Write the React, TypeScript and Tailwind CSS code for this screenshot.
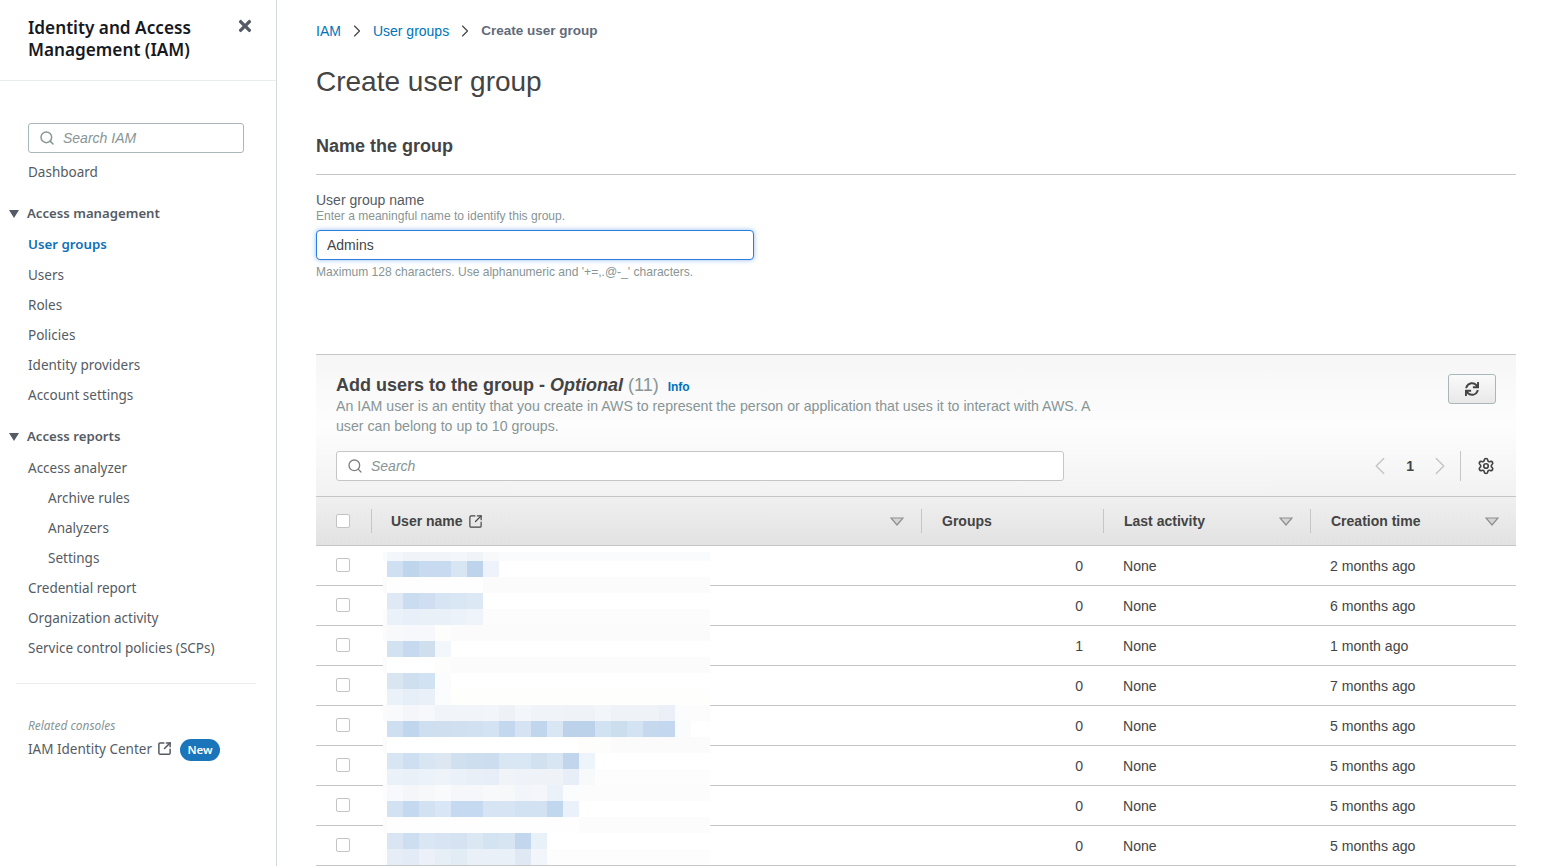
import React from "react";
import { Search, ChevronLeft, ChevronRight, Settings, SquareArrowOutUpRight } from "lucide-react";
import { FaSync, FaTimes } from "react-icons/fa";

const navFont = "font-['Noto_Sans',sans-serif]";

type NavProps = { label: string; indent?: boolean; active?: boolean };
function NavItem({ label, indent, active }: NavProps) {
  return (
    <div
      className={`h-[30px] flex items-center ${indent ? "pl-[48px]" : "pl-[28px]"} ${
        active ? "text-[13.3px] text-[#0f6fb8] font-semibold" : "text-[13.5px] text-[#545b64]"
      }`}
    >
      {label}
    </div>
  );
}

function NavSection({ label }: { label: string }) {
  return (
    <div className="h-[30px] flex items-center pl-[9px] text-[13.2px] font-semibold text-[#545b64]">
      <svg width="10" height="8" viewBox="0 0 10 8" className="mr-[8px]">
        <polygon points="0,0 10,0 5,8" fill="#545b64" />
      </svg>
      {label}
    </div>
  );
}

function Sidebar() {
  return (
    <aside className={`w-[277px] shrink-0 border-r border-[#d5dbdb] h-full bg-white ${navFont}`}>
      <div className="h-[81px] border-b border-[#eaeded] pl-[28px] pr-[22px] pt-[17px] flex items-start justify-between">
        <div className="text-[17.2px] leading-[22px] font-semibold text-[#16191f]">
          Identity and Access
          <br />
          Management (IAM)
        </div>
        <FaTimes className="text-[#545b64] text-[18px]" />
      </div>
      <div className="pt-[42px]">
        <div className="ml-[28px] mr-[32px] h-[30px] border border-[#aab7b8] rounded-[3px] flex items-center pl-[10px] font-['Liberation_Sans',sans-serif] italic text-[14px] text-[#879596]">
          <Search size={16} strokeWidth={2.2} className="mr-[8px] text-[#879596]" />
          Search IAM
        </div>
        <div className="mt-[4px]">
          <NavItem label="Dashboard" />
        </div>
        <div className="mt-[12px]">
          <NavSection label="Access management" />
          <div className="mt-[1px]">
            <NavItem label="User groups" active />
            <NavItem label="Users" />
            <NavItem label="Roles" />
            <NavItem label="Policies" />
            <NavItem label="Identity providers" />
            <NavItem label="Account settings" />
          </div>
        </div>
        <div className="mt-[12px]">
          <NavSection label="Access reports" />
          <div className="mt-[1px]">
            <NavItem label="Access analyzer" />
            <NavItem label="Archive rules" indent />
            <NavItem label="Analyzers" indent />
            <NavItem label="Settings" indent />
            <NavItem label="Credential report" />
            <NavItem label="Organization activity" />
            <NavItem label="Service control policies (SCPs)" />
          </div>
        </div>
        <div className="ml-[16px] mr-[20px] mt-[20px] border-t border-[#eaeded]" />
        <div className="pl-[28px] pt-[33px] text-[11.9px] leading-[16px] italic text-[#879596]">Related consoles</div>
        <div className="pl-[28px] mt-[4px] flex items-center h-[24px] text-[13.5px] text-[#545b64]">
          IAM Identity Center
          <SquareArrowOutUpRight size={15} strokeWidth={2.4} className="ml-[5px] -mt-[2px]" />
          <span className="ml-[8px] mt-[1px] h-[22px] w-[40px] rounded-full bg-[#1b75bb] text-white text-[11.5px] font-semibold flex items-center justify-center">
            New
          </span>
        </div>
      </div>
    </aside>
  );
}

function Caret() {
  return (
    <svg width="14" height="9" viewBox="0 0 14 9" className="shrink-0">
      <polygon points="1,1 13,1 7,8" fill="#d4d4d4" stroke="#8f8f8f" strokeWidth="1.2" />
    </svg>
  );
}

function Box() {
  return <span className="block w-[14px] h-[14px] rounded-[2px] border border-[#c4c4c4] bg-white" />;
}

const users: [string, string, string][] = [
  ["0", "None", "2 months ago"],
  ["0", "None", "6 months ago"],
  ["1", "None", "1 month ago"],
  ["0", "None", "7 months ago"],
  ["0", "None", "5 months ago"],
  ["0", "None", "5 months ago"],
  ["0", "None", "5 months ago"],
  ["0", "None", "5 months ago"],
];

const gridCols = "grid grid-cols-[55px_550px_182px_207px_206px]";

const mosaic: { h: number; bg: string; cells: string[] }[] = [
  { h: 9, bg: "#fafbfc", cells: ["#f3f6fa", "#eff4f9", "#f1f5fa", "#f1f5fa", "#f3f6fa", "#eff4f9", "#f8f9fb"] },
  { h: 16, bg: "#ffffff", cells: ["#cfe0f2", "#bfd5ec", "#c8daef", "#c8daef", "#d8e5f3", "#bed4ec", "#eef3fb"] },
  { h: 16, bg: "#fbfbfb", cells: ["#fefefe", "#fefefe", "#fefefe", "#fefefe", "#fefefe", "#fefefe"] },
  { h: 16, bg: "#ffffff", cells: ["#dee9f5", "#c9dcf0", "#cfdff1", "#d6e4f3", "#d9e6f4", "#dce8f4"] },
  { h: 16, bg: "#fcfcfc", cells: ["#eaf1f9", "#e8eff8", "#e9f0f8", "#e9f0f8", "#ecf2f9", "#eff4fa"] },
  { h: 16, bg: "#fbfbfc", cells: ["#f7f9fb", "#f6f8fb", "#f7f8fb", "#fdfdfb"] },
  { h: 16, bg: "#ffffff", cells: ["#d2e2f1", "#c6d9ee", "#cfdfee", "#f3f7fc"] },
  { h: 16, bg: "#fbfbfb", cells: ["#ffffff", "#ffffff", "#ffffff", "#fdfdfb"] },
  { h: 16, bg: "#ffffff", cells: ["#d9e5f1", "#cfdff0", "#d1e2f2", "#fafcfe"] },
  { h: 16, bg: "#fefefd", cells: ["#ebf1f9", "#e6eef7", "#e9f0f8", "#fbfcfe"] },
  {
    h: 16,
    bg: "#fbfbfc",
    cells: ["#f9fafc", "#f4f6f9", "#f7f8fb", "#f1f4f9", "#f1f4f9", "#f1f5f9", "#f2f5f9", "#eef2f7", "#f4f7fa", "#f0f3f8", "#f0f4f9", "#eff3f8", "#eff3f8", "#f3f6f9", "#eff3f8", "#eff3f8", "#eff3f8", "#ebf0f8", "#fbfcfd", "#fcfcfd"],
  },
  {
    h: 16,
    bg: "#ffffff",
    cells: ["#cddff0", "#bfd6ec", "#cddff0", "#cfdff0", "#d0e0f0", "#d1e1f1", "#d4e3f3", "#c3d7ee", "#d5e3f2", "#c0d6ec", "#d9e6f4", "#bbd2ea", "#bbd2ea", "#d1e2f3", "#cbdeee", "#d4e3f3", "#c5d8ee", "#c3d8ee", "#fafbfd"],
  },
  { h: 16, bg: "#fcfbfb", cells: ["#ffffff", "#ffffff", "#ffffff", "#ffffff", "#ffffff", "#ffffff", "#ffffff", "#ffffff", "#ffffff", "#ffffff", "#ffffff", "#ffffff", "#fefdfc", "#fdfdfc"] },
  { h: 16, bg: "#ffffff", cells: ["#d8e5f2", "#cddff0", "#d8e5f2", "#dce7f2", "#d1e0ef", "#cddeee", "#cbddee", "#d9e6f4", "#d9e6f4", "#d1e1f0", "#d8e5f3", "#c1d6ec", "#eef4fc"] },
  { h: 16, bg: "#fdfdfd", cells: ["#ebf1f9", "#eaf0f8", "#ecf2f9", "#eef3f9", "#ebf1f8", "#e9eff7", "#e7eef7", "#f0f4f9", "#eef3fa", "#eff3f8", "#eff3f8", "#e7eef7", "#f7f9fb"] },
  { h: 16, bg: "#fcfcfc", cells: ["#f8f9fc", "#f4f6fa", "#f6f8fa", "#f9fafb", "#f5f7fa", "#f5f7fa", "#f8f9fb", "#f6f8fa", "#f2f5f9", "#f4f6f9", "#ebf1f8", "#fbfcfd"] },
  { h: 16, bg: "#ffffff", cells: ["#d2e2f2", "#c4d9ef", "#d2e2f2", "#d8e6f5", "#c5daf1", "#c5daf1", "#d6e4f3", "#d6e4f3", "#d2e2f2", "#d2e2f2", "#c1d7ed", "#ebf1fa"] },
  { h: 16, bg: "#fcfcfc", cells: ["#fefefe", "#fefefe", "#fefefe", "#fefefe", "#fefefe", "#fefefe", "#fefefe", "#fefefe", "#fefefe", "#fefefe", "#fefefe", "#fefefe"] },
  { h: 16, bg: "#ffffff", cells: ["#d9e5f3", "#cddef0", "#dae6f4", "#d8e4f4", "#d4e2f2", "#dce7f4", "#d4e3f2", "#d7e4f2", "#c2d6ed", "#e8f0f8"] },
  { h: 16, bg: "#fdfdfd", cells: ["#e6edf7", "#e3ebf6", "#ecf1f9", "#e7eff6", "#e2ecf4", "#e9f0f8", "#e9f0f8", "#e9f0f8", "#e0e9f3", "#f2f5fa"] },
];

function Mosaic() {
  return (
    <div className="absolute left-[67px] top-[6px] w-[327px] bg-white">
      {mosaic.map((r, i) => (
        <div key={i} className="flex pl-[4px]" style={{ height: r.h, background: r.bg }}>
          {r.cells.map((c, j) => (
            <span key={j} className="block w-[16px] shrink-0" style={{ background: c }} />
          ))}
        </div>
      ))}
    </div>
  );
}

function HeaderCell({ label, caret, ext }: { label: string; caret?: boolean; ext?: boolean }) {
  return (
    <div className="h-[24px] flex items-center pl-[20px] pr-[17px] border-l border-[#c6c6c6]">
      <span className={`font-bold text-[14px] text-[#444444] ${ext ? "-ml-[1px]" : ""}`}>{label}</span>
      {ext && <SquareArrowOutUpRight size={15} strokeWidth={1.9} className="ml-[5px] text-[#444444]" />}
      {caret && (
        <span className="ml-auto">
          <Caret />
        </span>
      )}
    </div>
  );
}

export default function App() {
  return (
    <div className="w-[1545px] h-[866px] overflow-hidden flex bg-white font-['Liberation_Sans',sans-serif]">
      <Sidebar />
      <main className="flex-1 pl-[39px] pr-[29px] min-w-0">
        <nav className="h-[16px] mt-[23px] flex items-center text-[14px]">
          <span className="text-[#0073bb]">IAM</span>
          <ChevronRight size={20} strokeWidth={1.4} className="mx-[6px] text-[#444444]" />
          <span className="text-[#0073bb]">User groups</span>
          <ChevronRight size={20} strokeWidth={1.4} className="mx-[6px] text-[#444444]" />
          <span className="font-bold text-[13.5px] text-[#5f6b7a]">Create user group</span>
        </nav>
        <h1 className="mt-[22px] text-[28px] leading-[42px] text-[#444444]">Create user group</h1>
        <section>
          <h2 className="mt-[31px] text-[18px] leading-[24px] font-bold text-[#444444]">Name the group</h2>
          <div className="mt-[16px] border-t border-[#c6c6c6]" />
          <label className="block mt-[17px] text-[14px] leading-[16px] text-[#545b64]">User group name</label>
          <div className="text-[12.05px] leading-[14px] mt-[1px] text-[#879596]">Enter a meaningful name to identify this group.</div>
          <div className="mt-[7px] w-[438px] h-[30px] rounded-[4px] border border-[#2b7de0] shadow-[0_0_5px_rgba(43,125,224,0.5)] bg-white flex items-center pl-[10px] text-[14px] text-[#444444]">
            Admins
          </div>
          <div className="mt-[5px] text-[12.05px] leading-[14px] text-[#879596]">
            Maximum 128 characters. Use alphanumeric and '+=,.@-_' characters.
          </div>
        </section>

        <section className="mt-[75px] border-t border-[#c6c6c6]">
          <div className="h-[141px] bg-gradient-to-b from-[#f6f6f6] via-[#fdfdfd] to-[#f2f2f2] px-[20px] relative">
            <div className="pt-[19px] flex items-baseline h-[41px]">
              <span className="text-[18px] leading-[22px] font-bold text-[#444444]">Add users to the group -&nbsp;</span>
              <span className="text-[18px] leading-[22px] font-bold italic text-[#444444]">Optional</span>
              <span className="text-[18px] leading-[22px] text-[#879596] ml-[5px]">(11)</span>
              <span className="ml-[9px] text-[12px] font-bold text-[#0073bb]">Info</span>
            </div>
            <p className="w-[770px] text-[14.17px] leading-[20px] text-[#879596]">
              An IAM user is an entity that you create in AWS to represent the person or application that uses it to interact with AWS. A user can belong to up to 10 groups.
            </p>
            <div className="absolute right-[20px] top-[19px] w-[48px] h-[30px] rounded-[3px] border border-[#aab7b8] bg-gradient-to-b from-[#fafafa] to-[#e8e8e8] flex items-center justify-center">
              <FaSync className="text-[#444444] text-[14px]" />
            </div>
            <div className="mt-[15px] flex items-center">
              <div className="w-[728px] h-[30px] rounded-[3px] border border-[#c6c6c6] bg-white flex items-center pl-[10px] italic text-[14px] text-[#879596]">
                <Search size={16} strokeWidth={2} className="mr-[8px] text-[#7f7f7f]" />
                Search
              </div>
              <div className="ml-auto flex items-center h-[30px] mr-[1px]">
                <ChevronLeft size={30} strokeWidth={1.1} className="text-[#c4c4c4]" />
                <span className="mx-[11px] text-[14px] font-bold text-[#444444]">1</span>
                <ChevronRight size={30} strokeWidth={1.1} className="text-[#c4c4c4]" />
                <div className="ml-[5px] h-[30px] border-l border-[#c6c6c6] pl-[16px] flex items-center">
                  <Settings size={18} strokeWidth={2.2} className="text-[#444444]" />
                </div>
              </div>
            </div>
          </div>

          <div className="relative">
            <div className={`${gridCols} h-[50px] border-y border-[#c6c6c6] bg-gradient-to-b from-[#f0f0f0] to-[#e2e2e2] items-center`}>
              <div className="pl-[20px] -mt-[1px]">
                <Box />
              </div>
              <HeaderCell label="User name" ext caret />
              <HeaderCell label="Groups" />
              <HeaderCell label="Last activity" caret />
              <HeaderCell label="Creation time" caret />
            </div>
            {users.map(([groups, last, created], i) => (
              <div key={i} className={`${gridCols} h-[40px] border-b border-[#c6c6c6] items-center text-[14.1px] text-[#444444]`}>
                <div className="pl-[20px] -mt-[2px]">
                  <Box />
                </div>
                <div />
                <div className="text-right pr-[20px] mt-[2px]">{groups}</div>
                <div className="pl-[20px] mt-[2px]">{last}</div>
                <div className="pl-[20px] mt-[2px]">{created}</div>
              </div>
            ))}
            <div className="absolute inset-x-0 top-[50px] bottom-0 overflow-hidden pointer-events-none">
              <Mosaic />
            </div>
          </div>
        </section>
      </main>
    </div>
  );
}
